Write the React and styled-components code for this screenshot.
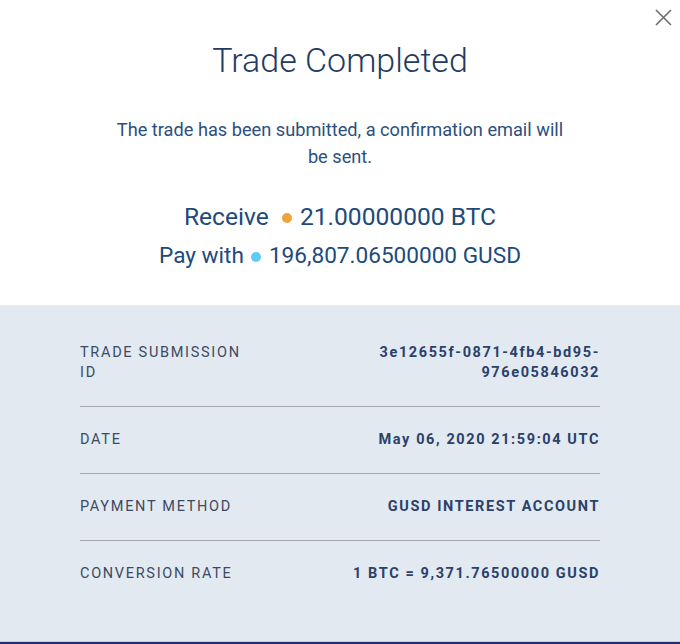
import React from "react";
import styled, {createGlobalStyle} from "styled-components";

const GlobalStyle = createGlobalStyle`
  html, body {
    margin: 0;
    padding: 0;
    background: #ffffff;
  }
  body {
    font-family: Roboto, "Liberation Sans", Arial, sans-serif;
  }
`;

const rows = [
  {label: "Trade Submission ID", value: ["3e12655f-0871-4fb4-bd95-", "976e05846032"]},
  {label: "Date", value: ["May 06, 2020 21:59:04 UTC"]},
  {label: "Payment Method", value: ["GUSD INTEREST ACCOUNT"]},
  {label: "Conversion Rate", value: ["1 BTC = 9,371.76500000 GUSD"]},
];

function App() {
  return (
    <>
      <GlobalStyle/>
      <Modal>
        <CloseButton aria-label="Close">
          <svg width="17" height="17" viewBox="0 0 17 17">
            <path d="M1 1 L16 16 M16 1 L1 16" stroke="#6d6f72" strokeWidth="1.6" fill="none"/>
          </svg>
        </CloseButton>
        <Header>
          <Title>Trade Completed</Title>
          <Message>The trade has been submitted, a confirmation email will be sent.</Message>
          <Amount size={24.6}>
            Receive&nbsp;<Dot color="#f0a33b"/>21.00000000 BTC
          </Amount>
          <Amount size={22.6}>
            Pay with<Dot color="#5ecbf7"/>196,807.06500000 GUSD
          </Amount>
        </Header>
        <Details>
          {rows.map((row) => (
            <Row key={row.label}>
              <Label>{row.label}</Label>
              <Value>
                {row.value.map((part, i) => (
                  <React.Fragment key={i}>
                    {i > 0 && <br/>}
                    {part}
                  </React.Fragment>
                ))}
              </Value>
            </Row>
          ))}
        </Details>
      </Modal>
    </>
  );
}

const Modal = styled.div`
    position: relative;
    width: 680px;
    height: 644px;
    display: flex;
    flex-direction: column;
    background: #ffffff;
    overflow: hidden;
`;
const CloseButton = styled.div`
    position: absolute;
    top: 9px;
    right: 8px;
    width: 17px;
    height: 17px;
`;
const Header = styled.div`
    display: flex;
    flex-direction: column;
    align-items: center;
    padding: 40px 0 30px;
    text-align: center;
`;
const Title = styled.h1`
    margin: 0;
    font-size: 34px;
    line-height: 40px;
    font-weight: 300;
    color: #1f3b61;
`;
const Message = styled.p`
    margin: 36px 0 27px;
    width: 456px;
    font-size: 18.2px;
    line-height: 27px;
    font-weight: 400;
    color: #2c4f7d;
`;
const Amount = styled.div`
    display: flex;
    align-items: center;
    font-size: ${(p) => p.size}px;
    line-height: 39px;
    color: #214a7a;
`;
const Dot = styled.span`
    display: inline-block;
    width: 10px;
    height: 10px;
    border-radius: 50%;
    margin: 2px 8px 0 7px;
    background: ${(p) => p.color};
`;
const Details = styled.div`
    flex: 1;
    background: #e2e9f1;
    border-top: 1px solid #e8edf0;
    padding: 37px 80px 0;
    border-bottom: 2px solid #1d2d6e;
    box-shadow: inset 0 -1px 0 #bcd0ee;
`;
const Row = styled.div`
    display: flex;
    justify-content: space-between;
    align-items: flex-start;
    padding: 23px 0;
    border-bottom: 1px solid #a3a6aa;

    &:first-child {
        padding-top: 0;
    }

    &:last-child {
        border-bottom: none;
    }
`;
const Label = styled.div`
    width: 165px;
    font-size: 14.5px;
    line-height: 20px;
    letter-spacing: 1.7px;
    text-transform: uppercase;
    color: #3b4a61;
`;
const Value = styled.div`
    text-align: right;
    font-size: 14.5px;
    line-height: 20px;
    font-weight: 700;
    letter-spacing: 1.6px;
    color: #2a4169;
`;

export default App;
